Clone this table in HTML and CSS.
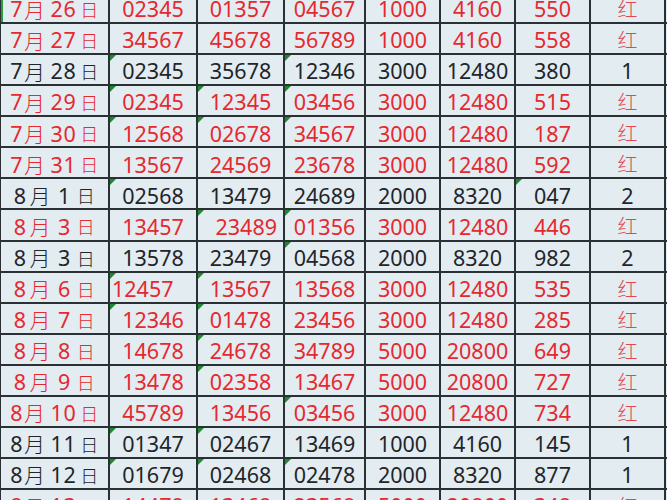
FILE: index.html
```html
<!DOCTYPE html>
<html lang="zh">
<head>
<meta charset="utf-8">
<link rel="stylesheet" href="styles.css">
</head>
<body>
<div class="frame">
<div class="sheet">
  <div class="row red"><div class="c date first">7<span class="m">月</span>26<span class="d">日</span></div><div class="c">02345</div><div class="c">01357</div><div class="c">04567</div><div class="c">1000</div><div class="c">4160</div><div class="c">550</div><div class="c h">红</div><div class="c"></div></div>
  <div class="row red"><div class="c date">7<span class="m">月</span>27<span class="d">日</span></div><div class="c">34567</div><div class="c">45678</div><div class="c">56789</div><div class="c">1000</div><div class="c">4160</div><div class="c">558</div><div class="c h">红</div><div class="c"></div></div>
  <div class="row blk"><div class="c date">7<span class="m">月</span>28<span class="d">日</span></div><div class="c t">02345</div><div class="c">35678</div><div class="c t">12346</div><div class="c">3000</div><div class="c">12480</div><div class="c">380</div><div class="c">1</div><div class="c"></div></div>
  <div class="row red"><div class="c date">7<span class="m">月</span>29<span class="d">日</span></div><div class="c t">02345</div><div class="c t">12345</div><div class="c t">03456</div><div class="c">3000</div><div class="c">12480</div><div class="c">515</div><div class="c h">红</div><div class="c"></div></div>
  <div class="row red"><div class="c date">7<span class="m">月</span>30<span class="d">日</span></div><div class="c t">12568</div><div class="c t">02678</div><div class="c t">34567</div><div class="c">3000</div><div class="c">12480</div><div class="c">187</div><div class="c h">红</div><div class="c"></div></div>
  <div class="row red"><div class="c date">7<span class="m">月</span>31<span class="d">日</span></div><div class="c">13567</div><div class="c">24569</div><div class="c">23678</div><div class="c">3000</div><div class="c">12480</div><div class="c">592</div><div class="c h">红</div><div class="c"></div></div>
  <div class="row blk"><div class="c date">8<span class="m sp">月</span>1<span class="d sp">日</span></div><div class="c t">02568</div><div class="c">13479</div><div class="c">24689</div><div class="c">2000</div><div class="c">8320</div><div class="c t">047</div><div class="c">2</div><div class="c"></div></div>
  <div class="row red"><div class="c date">8<span class="m sp">月</span>3<span class="d sp">日</span></div><div class="c">13457</div><div class="c t r">23489</div><div class="c t">01356</div><div class="c">3000</div><div class="c">12480</div><div class="c">446</div><div class="c h">红</div><div class="c"></div></div>
  <div class="row blk"><div class="c date">8<span class="m sp">月</span>3<span class="d sp">日</span></div><div class="c">13578</div><div class="c">23479</div><div class="c t">04568</div><div class="c">2000</div><div class="c">8320</div><div class="c">982</div><div class="c">2</div><div class="c"></div></div>
  <div class="row red"><div class="c date">8<span class="m sp">月</span>6<span class="d sp">日</span></div><div class="c t l">12457</div><div class="c t">13567</div><div class="c">13568</div><div class="c">3000</div><div class="c">12480</div><div class="c">535</div><div class="c h">红</div><div class="c"></div></div>
  <div class="row red"><div class="c date">8<span class="m sp">月</span>7<span class="d sp">日</span></div><div class="c t">12346</div><div class="c t">01478</div><div class="c">23456</div><div class="c">3000</div><div class="c">12480</div><div class="c">285</div><div class="c h">红</div><div class="c"></div></div>
  <div class="row red"><div class="c date">8<span class="m sp">月</span>8<span class="d sp">日</span></div><div class="c">14678</div><div class="c t">24678</div><div class="c">34789</div><div class="c">5000</div><div class="c">20800</div><div class="c">649</div><div class="c h">红</div><div class="c"></div></div>
  <div class="row red"><div class="c date">8<span class="m sp">月</span>9<span class="d sp">日</span></div><div class="c">13478</div><div class="c t">02358</div><div class="c">13467</div><div class="c">5000</div><div class="c">20800</div><div class="c">727</div><div class="c h">红</div><div class="c"></div></div>
  <div class="row red"><div class="c date">8<span class="m">月</span>10<span class="d">日</span></div><div class="c">45789</div><div class="c">13456</div><div class="c t">03456</div><div class="c">3000</div><div class="c">12480</div><div class="c">734</div><div class="c h">红</div><div class="c"></div></div>
  <div class="row blk"><div class="c date">8<span class="m">月</span>11<span class="d">日</span></div><div class="c t">01347</div><div class="c t">02467</div><div class="c">13469</div><div class="c">1000</div><div class="c">4160</div><div class="c">145</div><div class="c">1</div><div class="c"></div></div>
  <div class="row blk"><div class="c date">8<span class="m">月</span>12<span class="d">日</span></div><div class="c t">01679</div><div class="c t">02468</div><div class="c t">02478</div><div class="c">2000</div><div class="c">8320</div><div class="c">877</div><div class="c">1</div><div class="c"></div></div>
  <div class="row red"><div class="c date">8<span class="m">月</span>13<span class="d">日</span></div><div class="c">14478</div><div class="c">13468</div><div class="c">23568</div><div class="c">5000</div><div class="c">20800</div><div class="c">348</div><div class="c h">红</div><div class="c"></div></div>
</div>
</div>
</body>
</html>
```
FILE: styles.css
```css
html, body {
  margin: 0;
  padding: 0;
  background: #e2ecf1;
}

.frame {
  width: 667px;
  height: 500px;
  overflow: hidden;
}

.sheet {
  display: grid;
  grid-template-columns: 107px 86px 85px 79px 73px 73px 73px 73px 4px;
  grid-auto-rows: 29.07px;
  gap: 2px;
  padding: 2px 0 2px 2px;
  margin: -9px 0 0 -1px;
  width: max-content;
  background: #2b3034;
  font-family: "Noto Sans", "Noto Sans CJK SC", sans-serif;
  font-size: 21.5px;
}

.row {
  display: contents;
}

.c {
  position: relative;
  background: #e2ecf1;
  display: flex;
  align-items: center;
  justify-content: center;
  padding-top: 3px;
  box-sizing: border-box;
  white-space: nowrap;
  line-height: 1;
}

.red .c { color: #e6282f; }
.blk .c { color: #1f2529; }

.c.l { justify-content: flex-start; padding-left: 2px; }
.c.r { justify-content: flex-end; padding-right: 6px; }

.c.t::before {
  content: "";
  position: absolute;
  left: 0;
  top: 0;
  border-top: 6px solid #1c8a2c;
  border-right: 6px solid transparent;
}

.date {
  letter-spacing: 0.5px;
}

.first {
  box-shadow: inset 2px 0 0 #2f9a3e;
}

.m {
  font-family: "Noto Sans CJK SC", sans-serif;
  font-weight: 300;
  font-size: 21px;
  margin: 0 5px 0 1px;
}

.m.sp { margin: 0 7px 0 3px; }

.d {
  font-family: "Noto Sans CJK SC", sans-serif;
  font-weight: 300;
  font-size: 18px;
  margin-left: 4px;
}

.d.sp { margin-left: 6px; }

.red .c.h {
  font-family: "Noto Sans CJK SC", sans-serif;
  font-weight: 200;
  font-size: 20px;
  color: #e2474f;
}
```
